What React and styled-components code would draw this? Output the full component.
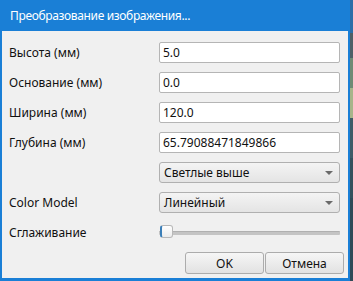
import React from "react";
import styled, { createGlobalStyle } from "styled-components";

const Global = createGlobalStyle`
  html, body { margin: 0; padding: 0; background: #2f4a57; }
  body { width: 353px; height: 281px; overflow: hidden; font-family: "Noto Sans", "DejaVu Sans", sans-serif; }
  * { box-sizing: border-box; }
`;

const Screen = styled.div`
  display: flex;
  width: 353px;
  height: 281px;
`;

const Window = styled.div`
  flex: 0 0 350px;
  display: flex;
  flex-direction: column;
  background: #1a7fd6;
  border: solid #1a7fd6;
  border-width: 0 2px 3px 2px;
`;

const TitleBar = styled.div`
  height: 31px;
  display: flex;
  align-items: center;
  padding-left: 8px;
  color: #ffffff;
  font-size: 12px;
  letter-spacing: -0.35px;
  line-height: 1;
`;

const Body = styled.div`
  flex: 1;
  background: #f0f0f0;
  padding: 11px 4px 0 7px;
  display: flex;
  flex-direction: column;
`;

const Form = styled.div`
  display: grid;
  grid-template-columns: 150px 1fr;
  grid-auto-rows: 21px;
  row-gap: 9px;
  margin-right: 4px;
`;

const Label = styled.div`
  display: flex;
  align-items: center;
  font-size: 12px;
  color: #111;
`;

const Input = styled.div`
  display: flex;
  align-items: center;
  background: #ffffff;
  border: 1px solid #b5b5b5;
  border-radius: 2px;
  padding-left: 3px;
  font-size: 12px;
  color: #111;
`;

const Combo = styled.div`
  display: flex;
  align-items: center;
  justify-content: space-between;
  background: linear-gradient(#f4f4f4, #e4e4e4);
  border: 1px solid #b0b0b0;
  border-radius: 3px;
  padding: 0 6px 0 4px;
  font-size: 12px;
  color: #111;
`;

const Arrow = styled.span`
  width: 0;
  height: 0;
  border-left: 4px solid transparent;
  border-right: 4px solid transparent;
  border-top: 4px solid #6a6a6a;
`;

const SliderTrack = styled.div`
  position: relative;
  display: flex;
  align-items: center;
`;

const Groove = styled.div`
  flex: 1;
  height: 4px;
  background: #c4c4c4;
  border-top: 1px solid #b0b0b0;
  border-radius: 1px;
`;

const Thumb = styled.div`
  position: absolute;
  left: 1px;
  top: 3px;
  width: 13px;
  height: 13px;
  background: linear-gradient(#ffffff, #ececec);
  border: 1px solid #b8b8b8;
  border-left: 2px solid #3c7fb8;
  border-radius: 3px;
`;

const ButtonRow = styled.div`
  display: flex;
  justify-content: flex-end;
  gap: 1px;
  margin-top: 9px;
`;

const Button = styled.div`
  width: 79px;
  height: 22px;
  display: flex;
  align-items: center;
  justify-content: center;
  background: linear-gradient(#f6f6f6, #e2e2e2);
  border: 1px solid #acacac;
  border-radius: 3px;
  font-size: 12px;
  color: #111;
`;

const Strip = styled.div`
  flex: 1;
  display: flex;
  flex-direction: column;
  background: #2f4a57;
`;

const StripSeg = styled.div`
  height: ${(p) => p.$h}px;
  background: ${(p) => p.$c};
`;

const segments = [
  { h: 33, c: "#2b6ea8" },
  { h: 25, c: "#4e5f66" },
  { h: 30, c: "#6f8a74" },
  { h: 30, c: "#a7b48a" },
  { h: 40, c: "#3e5b66" },
  { h: 40, c: "#34505c" },
  { h: 83, c: "#2f4a57" },
];

export default function App() {
  const rows = [
    ["Высота (мм)", "5.0"],
    ["Основание (мм)", "0.0"],
    ["Ширина (мм)", "120.0"],
    ["Глубина (мм)", "65.79088471849866"],
  ];
  return (
    <>
      <Global />
      <Screen>
        <Window>
          <TitleBar>Преобразование изображения...</TitleBar>
          <Body>
            <Form>
              {rows.map(([l, v]) => (
                <React.Fragment key={l}>
                  <Label>{l}</Label>
                  <Input>{v}</Input>
                </React.Fragment>
              ))}
              <Label />
              <Combo>
                Светлые выше
                <Arrow />
              </Combo>
              <Label>Color Model</Label>
              <Combo>
                Линейный
                <Arrow />
              </Combo>
              <Label>Сглаживание</Label>
              <SliderTrack>
                <Groove />
                <Thumb />
              </SliderTrack>
            </Form>
            <ButtonRow>
              <Button>OK</Button>
              <Button>Отмена</Button>
            </ButtonRow>
          </Body>
        </Window>
        <Strip>
          {segments.map((s, i) => (
            <StripSeg key={i} $h={s.h} $c={s.c} />
          ))}
        </Strip>
      </Screen>
    </>
  );
}
